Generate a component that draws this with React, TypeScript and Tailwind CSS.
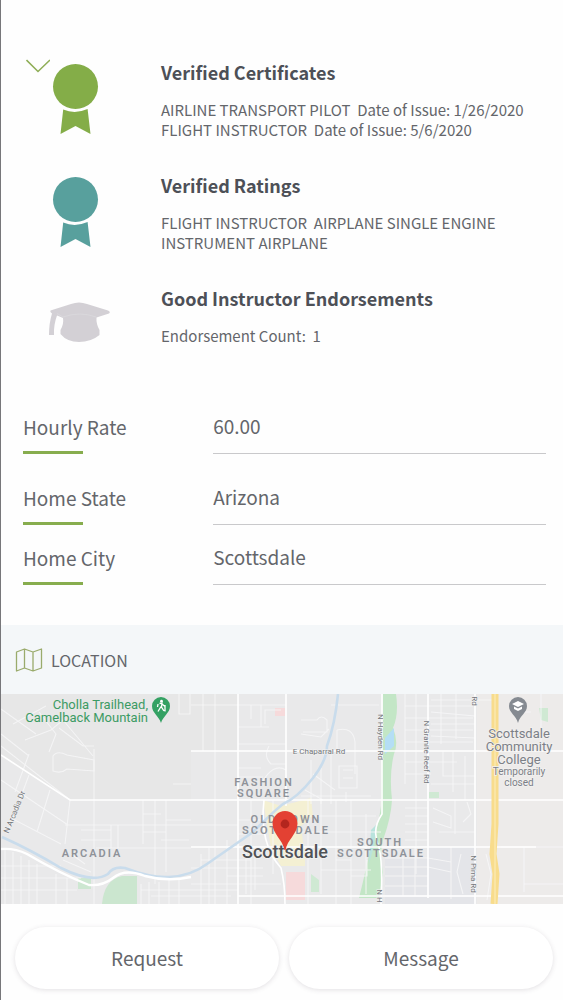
import type { ReactNode } from "react";

type IconKind = "certificate" | "rating" | "endorsement";

interface Credential {
  title: string;
  icon: IconKind;
  lines: string[];
}

const CREDENTIALS: Credential[] = [
  {
    title: "Verified Certificates",
    icon: "certificate",
    lines: [
      "AIRLINE TRANSPORT PILOT  Date of Issue: 1/26/2020",
      "FLIGHT INSTRUCTOR  Date of Issue: 5/6/2020",
    ],
  },
  {
    title: "Verified Ratings",
    icon: "rating",
    lines: ["FLIGHT INSTRUCTOR  AIRPLANE SINGLE ENGINE", "INSTRUMENT AIRPLANE"],
  },
  {
    title: "Good Instructor Endorsements",
    icon: "endorsement",
    lines: ["Endorsement Count:  1"],
  },
];

function Ribbon({ className }: { className: string }) {
  return (
    <svg viewBox="0 0 60 76" className={`h-[76px] w-[60px] ${className}`} fill="currentColor" aria-hidden="true">
      <circle cx="25.5" cy="27.5" r="22.5" />
      <path d="M13.2 50.500Q25 55.500 37.600 50L40.500 75L25.500 67L10.500 75Z" />
    </svg>
  );
}

function GraduationCap() {
  return (
    <svg viewBox="0 0 62 46" className="mt-4 -ml-px h-[46px] w-[62px] text-[#d3d0d5]" fill="currentColor" aria-hidden="true">
      <path d="M1.500 9.500L22 3Q30 0 38 3L59 9.500Q62 11 60 12.500L47.500 16.500Q47 23 50.500 29V34Q42 41 30 41Q18 41 11.500 33V29Q15 23 14 17L8 14.500Q4.500 24 5 34H0Q0 22 3 12.500Q0.500 11 1.500 9.500Z" />
      <path d="M8 12.500L14 16Q31 10 47 16" fill="none" stroke="#dbd9dd" strokeWidth="0.800" />
    </svg>
  );
}

function CredentialIcon({ kind }: { kind: IconKind }) {
  if (kind === "endorsement") return <GraduationCap />;
  return <Ribbon className={kind === "certificate" ? "text-[#84ad48]" : "text-[#58a09d]"} />;
}

function Field({ id, label, value }: { id: string; label: string; value: string }) {
  return (
    <div className="grid grid-cols-[4fr_7fr]">
      <div>
        <label htmlFor={id} className="block text-[19px] leading-7">
          {label}
        </label>
        <div className="mt-2.5 h-[3px] w-[60px] bg-[#87ad4e]" />
      </div>
      <input
        id={id}
        defaultValue={value}
        className="h-[41px] w-full min-w-0 border-b border-[#c9c9cb] bg-transparent pb-4 text-[19px] leading-6 outline-none"
      />
    </div>
  );
}

// Minor streets, drawn thin
const STREETS = [
  "M0 15L35 40M12 30L45 12M0 40L28 62M24 46L50 36L62 26L92 62M38 18L55 40L48 58M58 34L82 52H93",
  "M52 62Q56 56 66 61L93 66V77L66 75Q60 80 52 77Z",
  "M0 52L69 106M0 86L67 131M10 124L60 150M28 81L6 140M49 96L36 138M69 106L64 150M14 98L28 60",
  "M93 55V210M142 106V150M154 106V190M165 106V178M189 0V20H178V0",
  "M64 131H237M110 131V154M117 131V154M80 136H110M80 146H110M95 154H190M142 120H160M165 126H190M142 138H165M160 146H188M172 90H190",
  "M4 155V210M12 158V210M20 162V210M28 166V210M36 170V210M0 172H60M0 184H80M0 196H76M55 180V210M66 184V210M70 160L84 170M62 166L90 178",
  "M140 190V210M148 188V210M158 188V210M168 186V210M178 186V210M140 196H237M150 202H230",
  "M202 0V57M214 0V210M190 11H285M237 33H268M237 74H260M250 11V25M260 11V33M237 50H285",
  "M268 52Q262 62 270 70H285M260 90Q272 68 285 76M237 83H262M264 30V16H280",
  "M300 26H316Q320 20 326 26V38H302M300 40L320 43L328 35M330 11H378M336 36Q352 32 354 48V80M336 36V57M330 57V110M310 66V110M320 74V110",
  "M338 72H356V94H338ZM342 76H352M342 84H352M312 80L334 96M304 96L322 106M300 102H370M345 98V108",
  "M250 106V210M272 106V180M307 106V210M320 106V200M335 106V210M350 106V210M365 120V200M237 126H263M237 140H263M280 138H380M307 122H375M320 176H370M335 166H350V182H366V166",
  "M190 190H280M200 160V210M208 154V210M226 146V210M245 153V200M190 174H262M200 166H250M226 182H262M254 160V196",
  "M404 0V90M415 0V180M440 0V50M455 0V45M404 12H472M404 24H472M404 36H472M404 48H472M404 68H456M404 80H430",
  "M430 6H470M430 18L474 22M430 30H474M430 42L474 44M442 57V82H474M452 57V98M464 62V106M430 90H474",
  "M404 114H427M404 122H427M404 130H427M404 138H427M404 146H427M432 114L450 122V134L432 128M454 106V140M466 108L470 120L462 128M438 138H474",
  "M384 164H427M384 173H427M384 182H427M384 192H427M402 153V202M414 153V202M427 164L450 168M427 173L450 178M450 153V205M460 160L456 178L462 200M384 202H474",
  "M476 6H492M540 0V57M523 153V198M523 190H562M500 153H562M485 160L490 180L486 206M510 18H530",
];

const ROADS = [
  "M0 61L69 106H562",
  "M190 57H562",
  "M190 153H535",
  "M237 0V210",
  "M285 0V112",
  "M263 106Q258 150 280 174Q284 190 284 210",
  "M381 0V120Q370 136 378 153Q382 170 380 210",
  "M427 0V204",
  "M474 0V210",
  "M237 202H562",
];

function MapLabel({ x, y, children }: { x: number; y: number; children: ReactNode }) {
  return (
    <text x={x} y={y} fontSize={11} fontWeight="600" letterSpacing="2" textAnchor="middle" fill="#8e9299">
      {children}
    </text>
  );
}

function LocationMap() {
  return (
    <svg
      viewBox="0 0 562 210"
      preserveAspectRatio="xMidYMid slice"
      className="block h-[210px] w-full font-[Roboto,sans-serif]"
      role="img"
      aria-label="Map of Scottsdale"
    >
      <rect width="562" height="210" fill="#e9e9ea" />
      <path d="M0 0H237V57H190V106H69L0 61Z" fill="#e7e7e7" />
      <rect x="476" width="86" height="210" fill="#edebea" />
      <path d="M427 153H474V210H384V164H427Z" fill="#e4e5e9" />

      {/* Parks, shopping blocks */}
      <path d="M101 210Q103 186 121 182H136V210Z" fill="#cbe6cf" />
      <path d="M77 184H90V195H77Z" fill="#cde7d1" />
      <path d="M382 0H395Q398 20 392 34Q398 48 393 60Q388 80 391 106Q390 124 382 146Q378 160 382 178L378 204H358Q366 172 370 150Q378 130 380 112Z" fill="#c3e6c6" />
      <path d="M393 34V52L384 60V44Z" fill="#b4def5" />
      <path d="M370 136L376 130L373 152L368 170Z" fill="#b9e3dd" />
      <path d="M538 14H547V28L540 26ZM310 180L318 186V198H310ZM428 98H438V104H428Z" fill="#cfe9d3" />
      <path d="M262 106L280 112L310 104L312 122L300 132L304 164L304 172L280 172L270 154Z" fill="#f4f0d3" />
      <path d="M285 178H304V206H285ZM274 14H284V22H274Z" fill="#f6dadb" />

      <g fill="none" stroke="#f7f7f8" strokeWidth="1.1" opacity="0.85">
        {STREETS.map((d) => (
          <path key={d} d={d} />
        ))}
      </g>
      <g fill="none" stroke="#ffffff" strokeWidth="1.6">
        {ROADS.map((d) => (
          <path key={d} d={d} />
        ))}
      </g>

      {/* Arizona Canal */}
      <path
        d="M1 143Q30 156 60 174Q92 190 107 180Q112 172 124 174Q150 184 168 183Q190 182 206 170L252 138Q272 118 282 110Q296 104 312 84Q326 66 326 52Q334 30 337 0"
        fill="none"
        stroke="#c9dcec"
        strokeWidth="2.6"
      />
      <path d="M0 155Q14 154 26 160Q60 180 88 191Q102 192 112 184Q124 174 144 182Q166 188 190 183" fill="none" stroke="#ffffff" strokeWidth="2.4" />

      {/* Pima freeway */}
      <path d="M494 0V130L492 160L495 180L493 210" fill="none" stroke="#f8dc8c" strokeWidth="7" />
      <path d="M494 0V210" stroke="#fbe8ae" strokeWidth="1.5" />

      <g fontSize="13" fill="#3c9b64" textAnchor="end">
        <text x="147" y="15">Cholla Trailhead,</text>
        <text x="147" y="28">Camelback Mountain</text>
      </g>
      <path d="M160 3A9 9 0 0 1 169 12C169 19 162 22 160 29C158 22 151 19 151 12A9 9 0 0 1 160 3Z" fill="#34a163" />
      <circle cx="160.5" cy="7.2" r="1.4" fill="#fff" />
      <path d="M158.5 9.5L161 9L160.5 13L163 17M160 12.5L157 17.5M161 10L164 12.5M157 10L156.5 13M164 11V17.5" fill="none" stroke="#fff" strokeWidth="1.3" />

      <MapLabel x={263} y={92}>FASHION</MapLabel>
      <MapLabel x={263} y={103}>SQUARE</MapLabel>
      <MapLabel x={285} y={129}>OLD TOWN</MapLabel>
      <MapLabel x={285} y={140}>SCOTTSDALE</MapLabel>
      <MapLabel x={379} y={152}>SOUTH</MapLabel>
      <MapLabel x={380} y={163}>SCOTTSDALE</MapLabel>
      <MapLabel x={91} y={163}>ARCADIA</MapLabel>

      <g fontSize="8" fill="#74777c" stroke="#f2f2f2" strokeWidth="1" paintOrder="stroke" textAnchor="middle">
        <text x="318" y="60">E Chaparral Rd</text>
        <text transform="translate(377 43) rotate(90)">N Hayden Rd</text>
        <text transform="translate(423 58) rotate(90)">N Granite Reef Rd</text>
        <text transform="translate(470 180) rotate(90)">N Pima Rd</text>
        <text transform="translate(471 7) rotate(90)">Rd</text>
        <text transform="translate(376 202) rotate(90)">N H</text>
        <text transform="translate(16 119) rotate(-68)">N Arcadia Dr</text>
      </g>

      <text x="284" y="164" fontSize="18" fontWeight="500" textAnchor="middle" fill="#505256" stroke="#f2f2f2" strokeWidth="1.5" paintOrder="stroke">
        Scottsdale
      </text>

      <g fontSize="13" fill="#7c8087" textAnchor="middle" stroke="#f2f1f0" strokeWidth="1.5" paintOrder="stroke">
        <text x="518" y="44">Scottsdale</text>
        <text x="518" y="57">Community</text>
        <text x="518" y="70">College</text>
        <text x="518" y="81" fontSize="10">Temporarily</text>
        <text x="518" y="92" fontSize="10">closed</text>
      </g>
      <path d="M517 3A9 9 0 0 1 526 12C526 19 519 21 517 29C515 21 508 19 508 12A9 9 0 0 1 517 3Z" fill="#858a91" />
      <path d="M517 7L523 10L517 13L511 10ZM513 12.5L517 14.5L521 12.5V15L517 17L513 15Z" fill="#fff" />

      {/* Home marker */}
      <path d="M284 117A12.500 12.500 0 0 1 296.500 129.500C296.500 140 286 146 284.600 156H283.400C282 146 271.500 140 271.500 129.500A12.500 12.500 0 0 1 284 117Z" fill="#e34133" />
      <circle cx="284" cy="130" r="4.400" fill="#b3261e" />
    </svg>
  );
}

function ActionButton({ children }: { children: ReactNode }) {
  return (
    <button
      type="button"
      className="h-[62px] flex-1 rounded-full bg-white text-[19px] shadow-[0_1px_5px_rgba(80,70,90,0.16)]"
    >
      {children}
    </button>
  );
}

export default function App() {
  return (
    <main className="min-h-screen border-l border-[#77777a] bg-[#fefefe] pt-[59px] font-['Noto_Sans_CJK_SC',sans-serif] text-[#64666b]">
      <ul className="space-y-8 pl-[25px]">
        {CREDENTIALS.map((item, index) => (
          <li key={item.title} className="flex">
            <div className="w-6 shrink-0">
              {index === 0 && (
                <button type="button" aria-label="Collapse" className="block text-[#8fae57]">
                  <svg viewBox="0 0 24 14" className="h-3.5 w-6" fill="none" stroke="currentColor" strokeWidth="1.6">
                    <path d="M0.500 1L12 12.500L24 1" />
                  </svg>
                </button>
              )}
            </div>
            {/* Icons stand taller than the text beside them */}
            <div className="h-0 w-[111px] shrink-0">
              <CredentialIcon kind={item.icon} />
            </div>
            <div>
              <h2 className="text-lg leading-[26px] font-bold text-[#4d5057]">{item.title}</h2>
              <div className="mt-[15px] text-[15px] leading-5">
                {item.lines.map((line) => (
                  <p key={line} className="whitespace-pre-wrap">
                    {line}
                  </p>
                ))}
              </div>
            </div>
          </li>
        ))}
      </ul>

      <form className="mt-[67px] pr-[17px] pl-[22px]">
        <Field id="hourly-rate" label="Hourly Rate" value="60.00" />
        <div className="mt-[30px] space-y-[19px]">
          <Field id="home-state" label="Home State" value="Arizona" />
          <Field id="home-city" label="Home City" value="Scottsdale" />
        </div>
      </form>

      <section className="mt-10">
        <div className="flex h-[69px] items-center gap-2 bg-[#f4f7f9] pl-3.5">
          <svg viewBox="0 0 28 24" className="h-6 w-7" fill="none" stroke="#9aab6c" strokeWidth="1.3" aria-hidden="true">
            <path d="M1.500 4L9.500 1L18 4L26.500 1V20L18 23L9.500 20L1.500 23ZM9.500 1V20M18 4V23" strokeLinejoin="round" />
          </svg>
          <h3 className="text-base leading-6">LOCATION</h3>
        </div>
        <LocationMap />
      </section>

      <div className="flex gap-2.5 px-3.5 pt-[23px] pr-2.5 pb-[11px]">
        <ActionButton>Request</ActionButton>
        <ActionButton>Message</ActionButton>
      </div>
    </main>
  );
}
